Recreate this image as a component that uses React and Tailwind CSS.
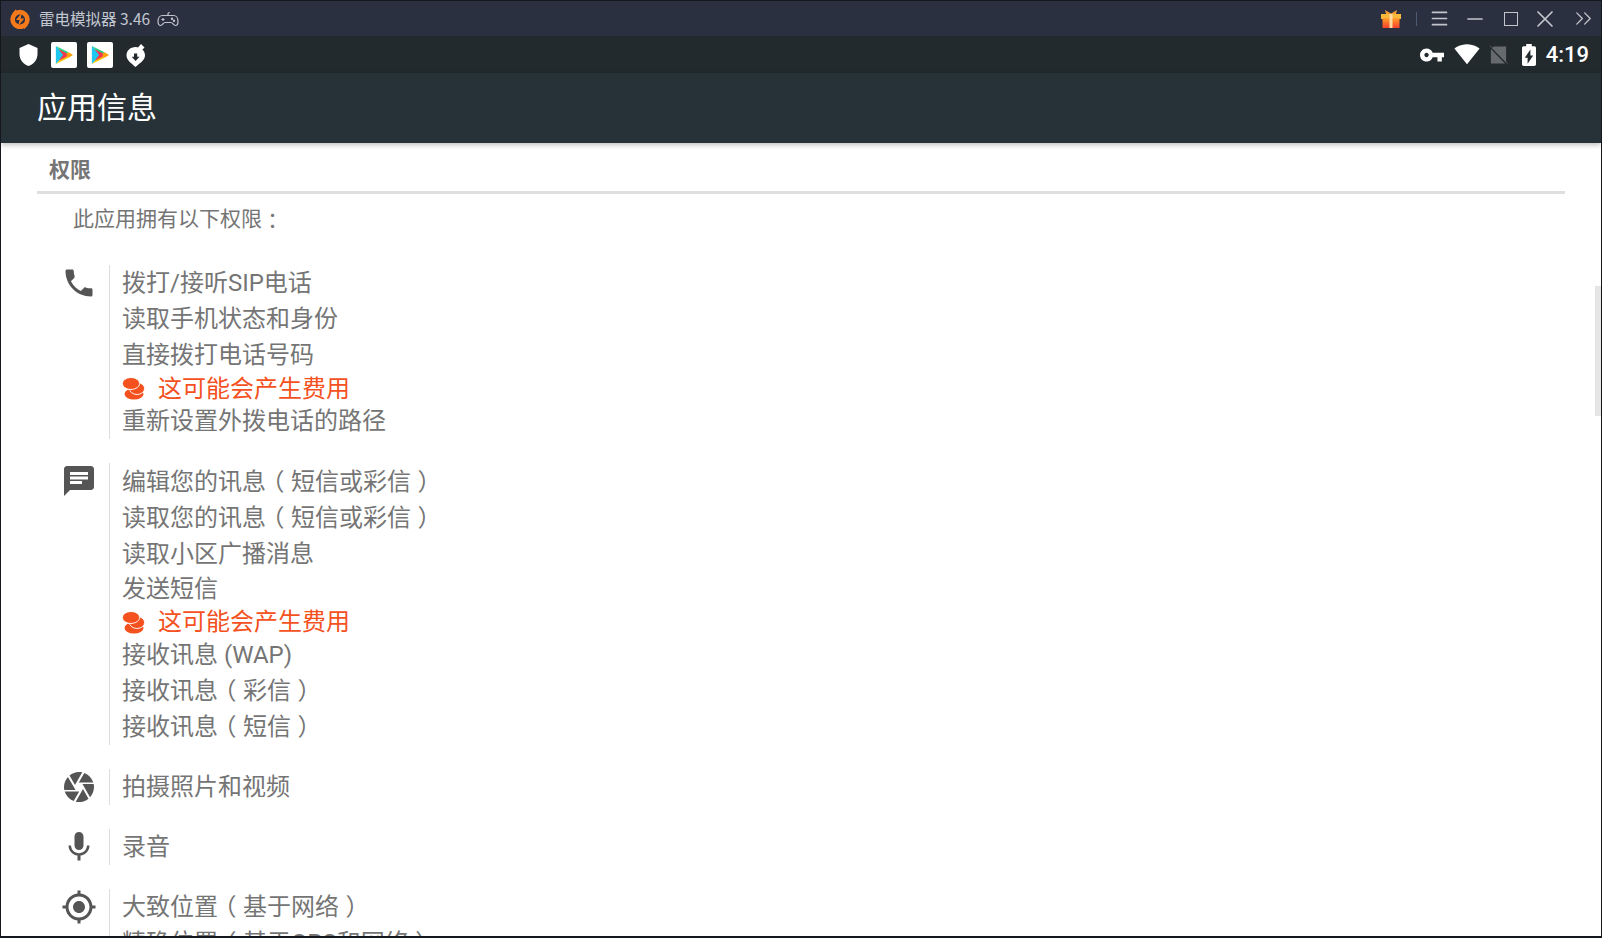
import { Menu, Minus, X, ChevronsRight } from 'lucide-react';

const ICONS = {
  phone:
    'M6.62 10.79c1.44 2.83 3.76 5.14 6.59 6.59l2.2-2.2c.27-.27.67-.36 1.02-.24 1.12.37 2.33.57 3.57.57.55 0 1 .45 1 1V20c0 .55-.45 1-1 1-9.39 0-17-7.61-17-17 0-.55.45-1 1-1h3.5c.55 0 1 .45 1 1 0 1.25.2 2.45.57 3.57.11.35.03.74-.25 1.02l-2.2 2.2z',
  message:
    'M20 2H4c-1.1 0-1.99.9-1.99 2L2 22l4-4h14c1.1 0 2-.9 2-2V4c0-1.1-.9-2-2-2zM6 9h12v2H6V9zm8 5H6v-2h8v2zm4-6H6V6h12v2z',
  camera:
    'M9.4 10.5l4.77-8.26C13.47 2.09 12.75 2 12 2c-2.4 0-4.6.85-6.32 2.25l3.66 6.35.06-.1zM21.54 9c-.92-2.92-3.15-5.26-6-6.34L11.88 9h9.66zm.26 1h-7.49l.29.5 4.76 8.25C21 16.97 22 14.61 22 12c0-.69-.07-1.35-.2-2zM8.54 12l-3.9-6.75C3.01 7.03 2 9.39 2 12c0 .69.07 1.35.2 2h7.49l-1.15-2zm-6.08 3c.92 2.92 3.15 5.26 6 6.34L12.12 15H2.46zm11.27 0l-3.9 6.76c.7.15 1.42.24 2.17.24 2.4 0 4.6-.85 6.32-2.25l-3.66-6.35-.93 1.6z',
  mic: 'M12 14c1.66 0 2.99-1.34 2.99-3L15 5c0-1.66-1.34-3-3-3S9 3.34 9 5v6c0 1.66 1.34 3 3 3zm5.3-3c0 3-2.54 5.1-5.3 5.1S6.7 14 6.7 11H5c0 3.41 2.72 6.23 6 6.72V21h2v-3.28c3.28-.48 6-3.3 6-6.72h-1.7z',
  gps: 'M12 8c-2.21 0-4 1.79-4 4s1.79 4 4 4 4-1.79 4-4-1.79-4-4-4zm8.94 3c-.46-4.17-3.77-7.48-7.94-7.94V1h-2v2.06C6.83 3.52 3.52 6.83 3.06 11H1v2h2.06c.46 4.17 3.77 7.48 7.94 7.94V23h2v-2.06c4.17-.46 7.48-3.77 7.94-7.94H23v-2h-2.06zM12 19c-3.87 0-7-3.13-7-7s3.13-7 7-7 7 3.13 7 7-3.13 7-7 7z',
};

function MdIcon({ d, className }) {
  return (
    <svg viewBox="0 0 24 24" className={className} fill="currentColor">
      <path d={d} />
    </svg>
  );
}

function Logo() {
  return (
    <svg viewBox="0 0 20 20" className="h-[20px] w-[20px]">
      <circle cx="10" cy="10.5" r="7.4" fill="none" stroke="#f47a1c" strokeWidth="4.6" />
      <path d="M2 5 L5.5 .5 L8.5 4z M18 16 L14.5 20 L11.5 17z" fill="#f47a1c" />
      <path d="M12 3.5 L6 11 H9.6 L8 17 L14.4 9.5 H10.6z" fill="#f47a1c" />
    </svg>
  );
}

function Gamepad() {
  return (
    <svg viewBox="0 0 22 16" className="ml-[7px] h-[16px] w-[22px]" fill="none" stroke="#c0c5ce" strokeWidth="1.2">
      <path d="M5.5 4.5h11c2.5 0 4.5 2.5 4.5 6 0 2.5-1 4-2.6 4-2 0-2.6-3-4.4-3H8c-1.8 0-2.4 3-4.4 3-1.6 0-2.6-1.5-2.6-4 0-3.5 2-6 4.5-6z" />
      <path d="M11 4.5V2.8c0-1 .8-1.3 1.8-1.3" />
      <path d="M4.5 8.5h3M6 7v3" />
      <circle cx="15" cy="7.8" r=".6" fill="#c0c5ce" />
      <circle cx="17" cy="9.8" r=".6" fill="#c0c5ce" />
    </svg>
  );
}

function PlayTile({ className = '' }) {
  return (
    <div className={`flex h-[26px] w-[26px] items-center justify-center rounded-[2px] bg-white ${className}`}>
      <svg viewBox="0 0 20 22" className="h-[20px] w-[18px]">
        <path d="M1 1 L11 11 L1 21z" fill="#1ec8f0" />
        <path d="M1 1 L15 8 L11 11z" fill="#2bd17e" />
        <path d="M1 21 L15 14 L11 11z" fill="#f7c600" />
        <path d="M11 11 L15 8 L20 11 L15 14z" fill="#ffa000" />
        <path d="M4 4.5 L13 9 L13 13 L4 17.5 L9 11z" fill="#f0384e" />
      </svg>
    </div>
  );
}

function BombIcon() {
  return (
    <svg viewBox="0 0 20 24" className="ml-[13px] h-[24px] w-[20px]">
      <path d="M12 4.5 L15 1 L18.5 4.5 L15.5 7.5z" fill="#fff" />
      <path d="M9.5 4C14.5 4 19 7.5 19 12.5 19 17 13.5 20.5 9.5 24 5.5 20.5 .5 17 .5 12.5 .5 7.5 4.5 4 9.5 4z" fill="#fff" />
      <path d="M8 10.5h3.2v3.2h2.3L9.6 18l-3.9-4.3H8z" fill="#222a2e" />
    </svg>
  );
}

function Gift() {
  return (
    <svg viewBox="0 0 20 18" className="h-[18px] w-[20px]">
      <defs>
        <linearGradient id="giftBody" x1="0" y1="0" x2="0" y2="1">
          <stop offset="0" stopColor="#ffa02a" />
          <stop offset="1" stopColor="#f5402c" />
        </linearGradient>
      </defs>
      <path d="M0 4h20v5H0z" fill="#f6b93b" />
      <path d="M1.5 8h17v10h-17z" fill="url(#giftBody)" />
      <path d="M8.5 4h3v14h-3z" fill="#ffd9a0" />
      <path d="M4 0 L10 3.5 L16 0 L15 4 H5z" fill="#f39c34" />
    </svg>
  );
}

function SimOff() {
  return (
    <svg viewBox="0 0 20 20" className="ml-[9px] h-[20px] w-[19px]">
      <path d="M5 1h13v18H2V4z" fill="#666a6c" />
      <path d="M0 0.5 L19 20" stroke="#222a2e" strokeWidth="1.6" />
      <path d="M1 0 L19.5 19" stroke="#666a6c" strokeWidth=".8" />
    </svg>
  );
}

function Coins() {
  return (
    <svg viewBox="0 0 23 23" className="h-[23px] w-[23px] shrink-0">
      <ellipse cx="12" cy="17" rx="9.5" ry="5.6" fill="#f4511e" />
      <ellipse cx="15" cy="11.5" rx="7.6" ry="6" fill="#f4511e" stroke="#fff" strokeWidth=".9" />
      <ellipse cx="9" cy="6.5" rx="8.6" ry="6" fill="#f4511e" stroke="#fff" strokeWidth=".9" />
    </svg>
  );
}

// los paréntesis del original van centrados en su caja
function Paren({ children }) {
  return <span className="px-[6.5px] [font-feature-settings:'halt']">{children}</span>;
}

function Row({ children, className = 'h-9' }) {
  return <div className={`flex items-center whitespace-nowrap ${className}`}>{children}</div>;
}

function Warn({ className }) {
  return (
    <div className={`flex items-center whitespace-nowrap text-[#f4511e] ${className}`}>
      <Coins />
      <span className="ml-[13px]">这可能会产生费用</span>
    </div>
  );
}

function Group({ icon, className = '', children }) {
  return (
    <div className={`ml-[60px] flex items-start ${className}`}>
      <MdIcon d={icon} className="mr-[12px] h-9 w-9 shrink-0 text-[#555555]" />
      <div className="border-l border-[#dddddd] pl-[12px]">{children}</div>
    </div>
  );
}

function WinButton({ children, className = 'w-9' }) {
  return <div className={`flex h-[35px] items-center justify-center ${className}`}>{children}</div>;
}

export default function App() {
  return (
    <div className="relative flex h-[938px] w-[1602px] flex-col overflow-hidden border-x border-b-2 border-[#14181d] bg-white font-[Roboto,'Noto_Sans_CJK_SC',sans-serif]">
      {/* barra del emulador */}
      <div className="flex h-9 shrink-0 items-center justify-between border-t border-[#14181d] bg-[#2a3040] pl-[9px]">
        <div className="flex items-center">
          <Logo />
          <span className="ml-[9px] text-[15.5px] leading-none text-[#c3c8d0] font-['Noto_Sans_CJK_SC',sans-serif]">
            雷电模拟器 3.46
          </span>
          <Gamepad />
        </div>
        <div className="flex items-center text-[#c2c6cc]">
          <Gift />
          <div className="ml-[15px] mr-[4px] h-[14px] w-px bg-[#4d5a70]" />
          <WinButton><Menu size={21} strokeWidth={1.7} absoluteStrokeWidth /></WinButton>
          <WinButton><Minus size={24} strokeWidth={1.7} absoluteStrokeWidth /></WinButton>
          <WinButton><div className="h-[14px] w-[14px] border-[1.5px] border-[#c2c6cc]" /></WinButton>
          <WinButton className="w-8"><X size={28} strokeWidth={1.7} absoluteStrokeWidth /></WinButton>
          <WinButton className="ml-[5px] w-[35px]"><ChevronsRight size={27} strokeWidth={1.3} absoluteStrokeWidth /></WinButton>
        </div>
      </div>

      {/* barra de estado */}
      <div className="flex h-[37px] shrink-0 items-center justify-between bg-[#222a2e] pl-[18px] pr-[12px]">
        <div className="flex items-center">
          <svg viewBox="3 1 18 22" className="h-[22px] w-[19px]" fill="#fff">
            <path d="M12 1L3 5v6c0 5.55 3.84 10.74 9 12 5.16-1.26 9-6.45 9-12V5l-9-4z" />
          </svg>
          <PlayTile className="ml-[13px]" />
          <PlayTile className="ml-[10px]" />
          <BombIcon />
        </div>
        <div className="flex items-center text-white">
          <svg viewBox="1 6 22 12" className="h-[14px] w-[24px]" fill="currentColor">
            <path d="M12.65 10C11.83 7.67 9.61 6 7 6c-3.31 0-6 2.69-6 6s2.69 6 6 6c2.61 0 4.83-1.67 5.65-4H17v4h4v-4h2v-4H12.65zM7 14c-1.1 0-2-.9-2-2s.9-2 2-2 2 .9 2 2-.9 2-2 2z" />
          </svg>
          <svg viewBox="0 3 24 19" className="ml-[10px] h-[21px] w-[26px]" fill="currentColor">
            <path d="M12.01 21.49L23.64 7c-.45-.34-4.93-4-11.64-4C5.28 3 .81 6.66.36 7l11.64 14.5.01-.01z" />
          </svg>
          <SimOff />
          <svg viewBox="7 2 10 20" preserveAspectRatio="none" className="ml-[14px] h-[22px] w-[14px]" fill="currentColor">
            <path d="M15.67 4H14V2h-4v2H8.33C7.6 4 7 4.6 7 5.33v15.33C7 21.4 7.6 22 8.33 22h7.33c.74 0 1.34-.6 1.34-1.33V5.33C17 4.6 16.4 4 15.67 4zM11 20v-5.5H9L13 7v5.5h2L11 20z" />
          </svg>
          <span className="ml-[10px] text-[22px] font-medium leading-none">4:19</span>
        </div>
      </div>

      {/* barra de la app */}
      <div className="flex h-[70px] shrink-0 items-center bg-[#263238] pl-[36px] pb-px text-[30px] text-white shadow-[0_2px_5px_rgba(0,0,0,0.25)]">
        应用信息
      </div>

      {/* contenido */}
      <div className="min-h-0 flex-1 overflow-hidden text-[24px] text-[#757575]">
        <div className="mx-[36px] flex h-[51px] items-end border-b-[3px] border-[#dfdfdf] pb-[7px] pl-[12px] text-[21px] font-bold leading-[28px]">
          权限
        </div>
        <div className="ml-[72px] flex h-[50px] items-center text-[21px] leading-none">
          此应用拥有以下权限<span className="font-['Noto_Sans_CJK_TC',sans-serif]">：</span>
        </div>

        <Group icon={ICONS.phone} className="mt-[21px]">
          <Row>拨打/接听SIP电话</Row>
          <Row>读取手机状态和身份</Row>
          <Row>直接拨打电话号码</Row>
          <Warn className="h-[31px]" />
          <Row className="h-[35px] pb-px">重新设置外拨电话的路径</Row>
        </Group>

        <Group icon={ICONS.message} className="mt-6">
          <Row className="h-[37px]">编辑您的讯息<Paren>（</Paren>短信或彩信<Paren>）</Paren></Row>
          <Row>读取您的讯息<Paren>（</Paren>短信或彩信<Paren>）</Paren></Row>
          <Row className="h-[35px]">读取小区广播消息</Row>
          <Row>发送短信</Row>
          <Warn className="h-[30px]" />
          <Row>接收讯息 (WAP)</Row>
          <Row>接收讯息<Paren>（</Paren>彩信<Paren>）</Paren></Row>
          <Row>接收讯息<Paren>（</Paren>短信<Paren>）</Paren></Row>
        </Group>

        <Group icon={ICONS.camera} className="mt-6">
          <Row>拍摄照片和视频</Row>
        </Group>

        <Group icon={ICONS.mic} className="mt-6">
          <Row>录音</Row>
        </Group>

        <Group icon={ICONS.gps} className="mt-6">
          <Row>大致位置<Paren>（</Paren>基于网络<Paren>）</Paren></Row>
          <Row>精确位置<Paren>（</Paren>基于GPS和网络<Paren>）</Paren></Row>
        </Group>
      </div>

      {/* scrollbar */}
      <div className="absolute right-0 top-[286px] h-[130px] w-[6px] bg-[#e5e5e5]" />
    </div>
  );
}
